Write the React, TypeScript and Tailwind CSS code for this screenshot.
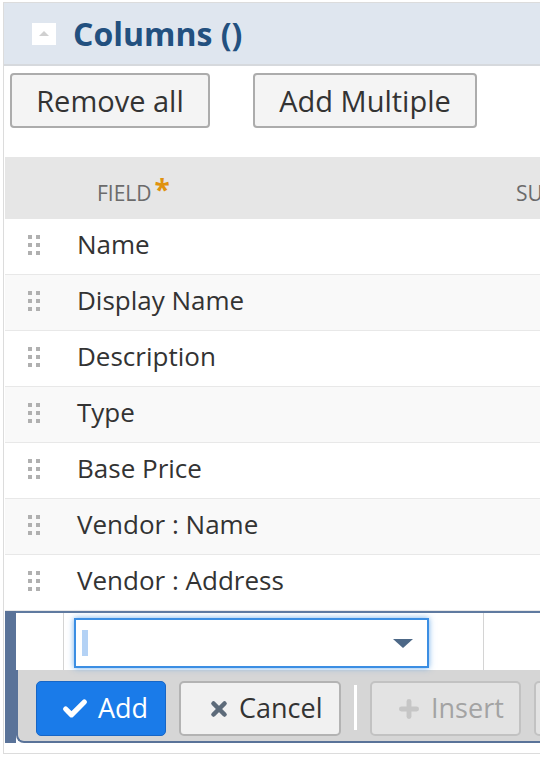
import { Check, X, Plus } from "lucide-react";

const fields = [
  "Name",
  "Display Name",
  "Description",
  "Type",
  "Base Price",
  "Vendor : Name",
  "Vendor : Address",
];

function DragHandle() {
  return (
    <div className="grid grid-cols-2 gap-x-[4px] gap-y-[4px] w-[12px]">
      {Array.from({ length: 6 }).map((_, i) => (
        <span key={i} className="size-[4px] bg-[#b0b0b0]" />
      ))}
    </div>
  );
}

export default function App() {
  return (
    <div
      className="w-[540px] h-[770px] overflow-hidden bg-white pt-[2px]"
      style={{ fontFamily: '"Open Sans", "Noto Sans", sans-serif' }}
    >
      <div className="ml-[3px] w-[560px] border-l border-t border-b border-[#dcdcdc] pb-[10px]">
        {/* Section header */}
        <div className="h-[63px] bg-[#dfe6ef] border-b-2 border-[#d6d9dd] flex items-center pl-[28px]">
          <div className="w-[24px] h-[22px] bg-white flex items-center justify-center">
            <span className="w-0 h-0 border-l-[5px] border-r-[5px] border-b-[5px] border-l-transparent border-r-transparent border-b-[#d0d0d0]" />
          </div>
          <h2 className="ml-[17px] text-[32px] font-bold text-[#22507f] leading-none">
            Columns ()
          </h2>
        </div>

        {/* Actions */}
        <div className="flex gap-[43px] pl-[6px] pt-[7px]">
          <button className="w-[200px] h-[55px] rounded-[4px] border-2 border-[#acacac] bg-[#f4f4f4] text-[29px] text-[#333]">
            Remove all
          </button>
          <button className="w-[224px] h-[55px] rounded-[4px] border-2 border-[#acacac] bg-[#f4f4f4] text-[29px] text-[#333]">
            Add Multiple
          </button>
        </div>

        {/* Table */}
        <div className="mt-[29px] ml-[1px]">
          <div className="h-[62px] bg-[#e6e6e6] flex items-center pt-[11px]">
            <div className="pl-[92px] w-[511px] flex items-start text-[21px] text-[#6b6b6b] uppercase">
              <span>Field</span>
              <span className="ml-[3px] mt-[-3px] text-[28px] font-bold text-[#e0920f] leading-none">*</span>
            </div>
            <span className="text-[21px] text-[#6b6b6b] uppercase">Sum</span>
          </div>

          {fields.map((f, i) => (
            <div
              key={f}
              className={`h-[56px] flex items-center border-b border-[#e8e8e8] pb-[4px] ${
                i % 2 === 1 ? "bg-[#f9f9f9]" : "bg-white"
              }`}
            >
              <div className="w-[72px] pl-[23px]">
                <DragHandle />
              </div>
              <span className="text-[26px] text-[#333]">{f}</span>
            </div>
          ))}

          {/* Edit row */}
          <div className="flex">
            <div className="w-[11px] shrink-0 bg-[#5a7399]" />
            <div className="flex-1 min-w-0">
              <div className="h-[59px] flex border-t-2 border-[#5f7aa0] bg-white">
                <div className="w-[48px] shrink-0 border-r border-[#d4d4d4]" />
                <div className="w-[420px] shrink-0 border-r border-[#d4d4d4] pl-[10px] pt-[5px]">
                  <div className="w-[355px] h-[50px] border-2 border-[#3b8ee3] shadow-[0_0_6px_rgba(59,142,227,0.7)] bg-white flex items-center justify-between pl-[6px] pr-[14px]">
                    <span className="w-[6px] h-[26px] bg-[#b4d2f5]" />
                    <span className="w-0 h-0 border-l-[10px] border-r-[10px] border-t-[9px] border-l-transparent border-r-transparent border-t-[#4d6887]" />
                  </div>
                </div>
              </div>
              <div className="h-[73px] bg-[#d6d6d6] border-l-2 border-b-2 border-[#5a7399] rounded-bl-[8px] flex items-start gap-[13px] pl-[18px] pt-[11px]">
                <button className="shrink-0 h-[55px] w-[130px] rounded-[5px] bg-[#1a7be9] border border-[#1766c6] flex items-center gap-[9px] pl-[24px] text-white text-[27px]">
                  <Check size={28} strokeWidth={4.5} />
                  Add
                </button>
                <button className="shrink-0 h-[55px] w-[162px] rounded-[5px] bg-[#f1f1f1] border-2 border-[#b3b3b3] flex items-center gap-[9px] pl-[27px] text-[#333] text-[27px]">
                  <X size={22} strokeWidth={5} className="text-[#5d6b7a]" />
                  Cancel
                </button>
                <span className="shrink-0 mt-[4px] w-[3px] h-[45px] bg-white" />
                <button className="shrink-0 h-[55px] w-[151px] rounded-[5px] bg-[#e3e3e3] border-2 border-[#c2c2c2] flex items-center gap-[9px] pl-[24px] text-[#a3a3a3] text-[27px]">
                  <Plus size={26} strokeWidth={4.5} className="text-[#c6c6c6]" />
                  Insert
                </button>
                <button className="shrink-0 h-[55px] w-[120px] rounded-[5px] bg-[#e3e3e3] border-2 border-[#c2c2c2]" />
              </div>
            </div>
          </div>
        </div>
      </div>
    </div>
  );
}
